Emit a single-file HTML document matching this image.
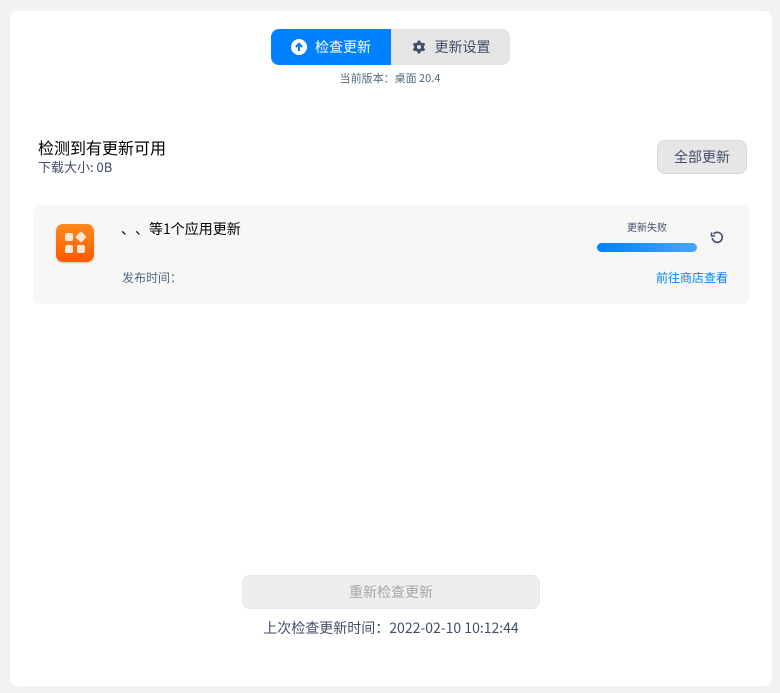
<!DOCTYPE html>
<html><head><meta charset="utf-8"><style>
*{margin:0;padding:0;box-sizing:border-box}
body{width:780px;height:693px;background:#f2f2f2;font-family:"Noto Sans CJK SC","Liberation Sans",sans-serif;position:relative;overflow:hidden}
.card{position:absolute;left:10px;top:11px;width:762px;height:675px;background:#fff;border-radius:8px}
.abs{position:absolute;line-height:1.2}
.p{display:inline-block;width:1em}
.seg{position:absolute;left:271px;top:29px;width:239px;height:36px;border-radius:8px;overflow:hidden;display:flex}
.seg div{height:36px;display:flex;align-items:center;justify-content:center;font-size:14px}
</style></head><body>
<div class="card"></div>
<div class="seg">
 <div style="width:120px;background:#0081ff;color:#fff;gap:8px">
  <svg width="16" height="16" viewBox="0 0 16 16"><circle cx="8" cy="8" r="8" fill="#fff"/><path d="M8 12V5M4.8 8L8 4.8 11.2 8" stroke="#0081ff" stroke-width="2" fill="none"/></svg>检查更新</div>
 <div style="width:119px;background:#e5e5e5;color:#414d68;gap:8px">
  <svg width="16" height="16" viewBox="0 0 16 16"><g fill="#414d68"><circle cx="8" cy="8" r="5"/><rect x="6.5" y="1.5" width="3" height="13" rx="1"/><rect x="6.5" y="1.5" width="3" height="13" rx="1" transform="rotate(60 8 8)"/><rect x="6.5" y="1.5" width="3" height="13" rx="1" transform="rotate(120 8 8)"/></g><circle cx="8" cy="8" r="2" fill="#e5e5e5"/></svg>更新设置</div>
</div>
<div class="abs" style="left:0;width:780px;top:72px;text-align:center;font-size:11px;color:#526a7f">当前版本<span class="p">：</span>桌面 20.4</div>
<div class="abs" style="left:38px;top:138px;font-size:16px;color:#000">检测到有更新可用</div>
<div class="abs" style="left:38px;top:159px;font-size:13px;color:#414d68">下载大小: 0B</div>
<div class="abs" style="left:657px;top:140px;width:90px;height:34px;background:#e6e6e6;border:1px solid #d8d8d8;border-radius:8px;font-size:14px;color:#414d68;display:flex;align-items:center;justify-content:center">全部更新</div>
<div class="abs" style="left:33px;top:205px;width:717px;height:99px;background:#f7f7f7;border-radius:8px"></div>
<div class="abs" style="left:56px;top:224px;width:38px;height:38px;border-radius:7px;background:linear-gradient(180deg,#ff8a1e,#ff5a00);box-shadow:0 1px 2px rgba(0,0,0,.2)">
 <div class="abs" style="left:9px;top:9px;width:8px;height:8px;background:#fde8d6;border-radius:2px"></div>
 <div class="abs" style="left:21px;top:9px;width:8px;height:8px;background:#fde8d6;border-radius:1px;transform:rotate(45deg)"></div>
 <div class="abs" style="left:9px;top:21px;width:8px;height:8px;background:#fde8d6;border-radius:2px"></div>
 <div class="abs" style="left:21px;top:21px;width:8px;height:8px;background:#fde8d6;border-radius:2px"></div>
</div>
<div class="abs" style="left:121px;top:221px;font-size:14px;color:#000"><span class="p">、</span><span class="p">、</span>等1个应用更新</div>
<div class="abs" style="left:122px;top:271px;font-size:12px;color:#526a7f">发布时间<span class="p">：</span></div>
<div class="abs" style="left:627px;top:221px;font-size:10px;color:#414d68">更新失败</div>
<div class="abs" style="left:597px;top:243px;width:100px;height:9px;border-radius:5px;background:linear-gradient(90deg,#0081ff,#4aa5ff)"></div>
<svg class="abs" style="left:710px;top:230px" width="14" height="14" viewBox="0 0 14 14"><path d="M3.5 4A5 5 0 1 1 2.3 8" stroke="#414d68" stroke-width="1.6" fill="none"/><path d="M1.5 2.5V6H5" stroke="#414d68" stroke-width="1.6" fill="none"/></svg>
<div class="abs" style="left:656px;top:271px;font-size:12px;color:#0081ff">前往商店查看</div>
<div class="abs" style="left:242px;top:575px;width:298px;height:34px;background:#eeeeee;border:1px solid #e6e6e6;border-radius:8px;font-size:14px;color:#a6a6a6;display:flex;align-items:center;justify-content:center">重新检查更新</div>
<div class="abs" style="left:0;width:782px;top:620px;text-align:center;font-size:14px;color:#414d68">上次检查更新时间<span class="p">：</span>2022-02-10 10:12:44</div>
</body></html>
